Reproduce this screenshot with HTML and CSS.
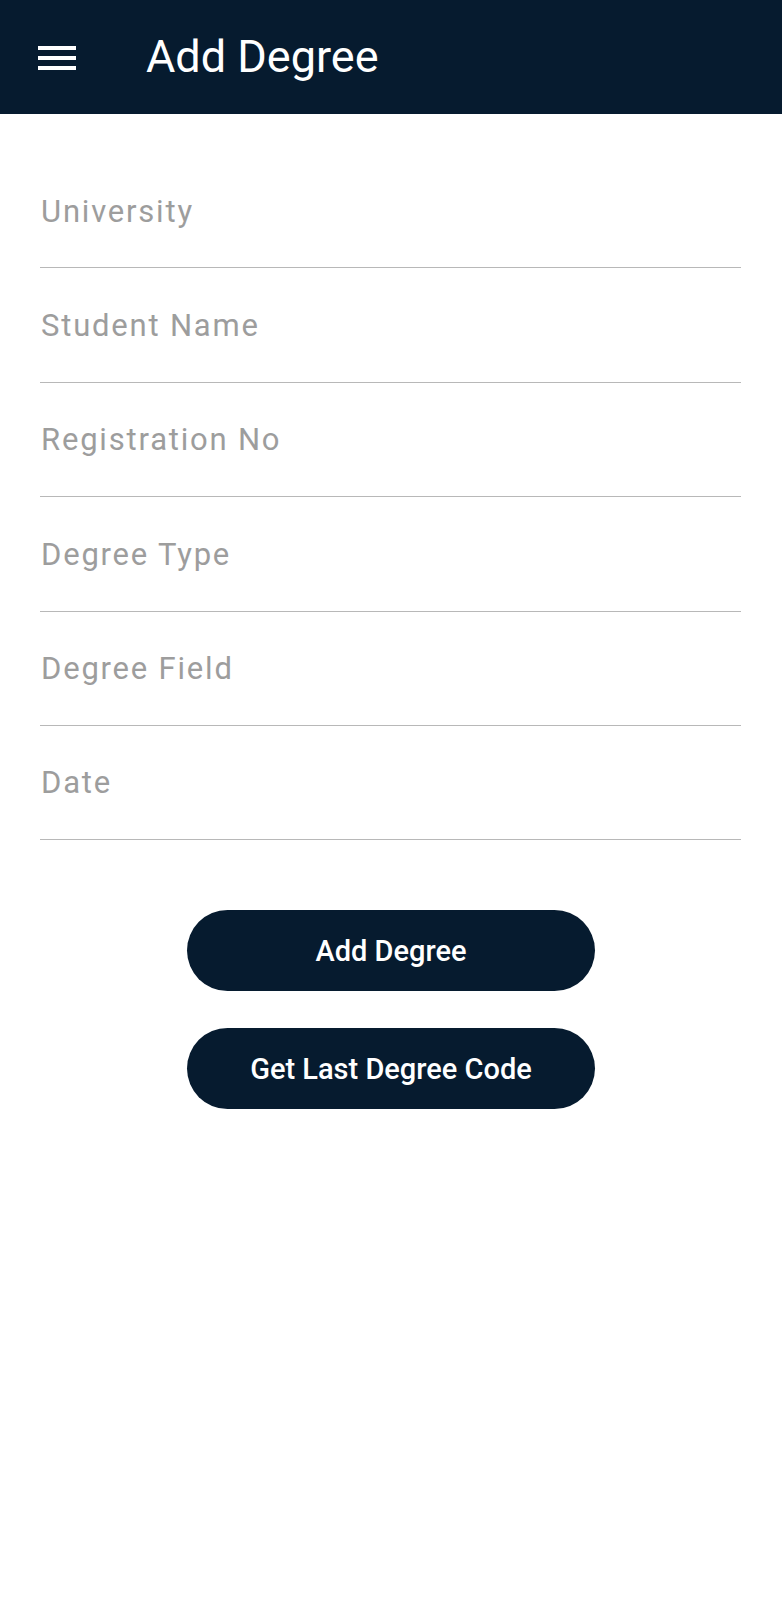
FILE: index.html
```html
<!DOCTYPE html>
<html lang="en">
<head>
<meta charset="utf-8">
<title>Add Degree</title>
<link rel="stylesheet" href="styles.css">
</head>
<body>
  <header class="appbar">
    <button class="menu-btn" aria-label="Menu">
      <svg width="38" height="24" viewBox="0 0 38 24">
        <rect x="0" y="0" width="38" height="4" fill="#ffffff"/>
        <rect x="0" y="10" width="38" height="4" fill="#ffffff"/>
        <rect x="0" y="20" width="38" height="4" fill="#ffffff"/>
      </svg>
    </button>
    <h1 class="title">Add Degree</h1>
  </header>
  <main class="content">
    <form class="form">
      <div class="field"><span class="hint">University</span></div>
      <div class="field"><span class="hint">Student Name</span></div>
      <div class="field"><span class="hint">Registration No</span></div>
      <div class="field"><span class="hint">Degree Type</span></div>
      <div class="field"><span class="hint">Degree Field</span></div>
      <div class="field"><span class="hint">Date</span></div>
    </form>
    <div class="actions">
      <button class="pill">Add Degree</button>
      <button class="pill">Get Last Degree Code</button>
    </div>
  </main>
</body>
</html>
```

FILE: styles.css
```css
html, body {
  margin: 0;
  padding: 0;
  background: #ffffff;
  font-family: Roboto, "Liberation Sans", sans-serif;
}

.appbar {
  height: 114px;
  background: #061b2f;
  display: flex;
  align-items: center;
  padding-left: 38px;
  box-sizing: border-box;
}

.menu-btn {
  background: none;
  border: 0;
  padding: 0;
  margin: 0;
  width: 38px;
  height: 24px;
  display: block;
  margin-top: 1px;
}

.menu-btn svg {
  display: block;
}

.title {
  margin: 0 0 0 70px;
  color: #ffffff;
  font-size: 45px;
  font-weight: 400;
  line-height: 53px;
  padding-bottom: 2px;
}

.content {
  padding: 41px 41px 0 40px;
}

.form {
  display: flex;
  flex-direction: column;
}

.field {
  padding: 39.5px 0 37.9px 0;
  border-bottom: 1px solid #b8b8b8;
}

.field:first-child {
  padding-top: 38.5px;
}

.hint {
  display: block;
  color: #9d9d9d;
  font-size: 31px;
  line-height: 36px;
  letter-spacing: 1.8px;
  padding-left: 1px;
}

.actions {
  display: flex;
  flex-direction: column;
  align-items: center;
  gap: 37px;
  padding-top: 70px;
  margin-left: 1px;
}

.pill {
  width: 408px;
  height: 81px;
  border: 0;
  border-radius: 41px;
  background: #061b2f;
  color: #ffffff;
  font-family: Roboto, "Liberation Sans", sans-serif;
  font-size: 29px;
  font-weight: 500;
  padding: 0;
}
```
